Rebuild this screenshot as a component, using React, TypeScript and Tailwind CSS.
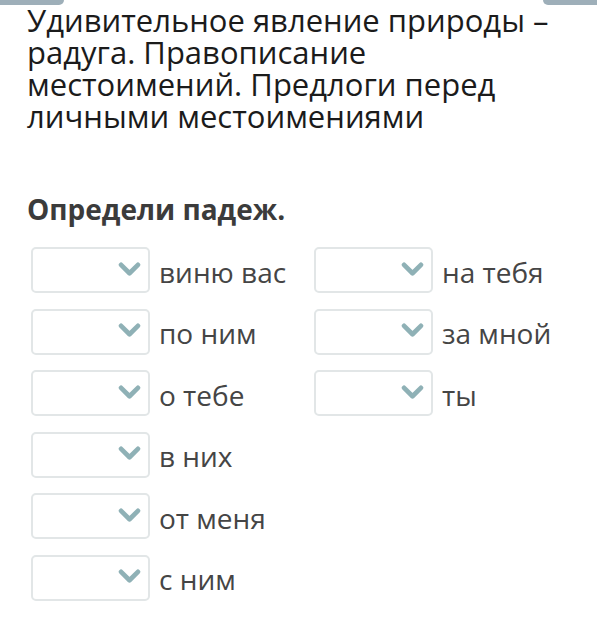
import React from 'react';

interface Item {
  id: number;
  label: string;
}

const LEFT: Item[] = [
  { id: 1, label: 'виню вас' },
  { id: 2, label: 'по ним' },
  { id: 3, label: 'о тебе' },
  { id: 4, label: 'в них' },
  { id: 5, label: 'от меня' },
  { id: 6, label: 'с ним' },
];

const RIGHT: Item[] = [
  { id: 7, label: 'на тебя' },
  { id: 8, label: 'за мной' },
  { id: 9, label: 'ты' },
];

const Chevron: React.FC = () => (
  <svg viewBox="0 0 24 16" className="w-[23px] h-[15px]" fill="none" stroke="#8fb1b6" strokeWidth="5" strokeLinecap="round" strokeLinejoin="round">
    <path d="M3 3l9 9 9-9" />
  </svg>
);

const Row: React.FC<{ item: Item }> = ({ item }) => (
  <div className="flex items-center h-[46px]">
    <div className="w-[119px] h-[46px] border-2 border-[#e2e6e7] rounded-[5px] bg-white flex items-center justify-end pr-[7px] pb-[2px]">
      <Chevron />
    </div>
    <span className="ml-[9px] pt-[3px] text-[28px] text-[#454545]">{item.label}</span>
  </div>
);

const App: React.FC = () => {
  return (
    <div className="relative w-[597px] h-[619px] bg-white overflow-hidden" style={{ fontFamily: '"Open Sans", sans-serif' }}>
      {/* top edge tabs */}
      <div className="absolute top-0 left-0 w-[64px] h-[5px] bg-[#9eafb9] rounded-br-[6px]" />
      <div className="absolute top-0 right-0 w-[54px] h-[5px] bg-[#9eafb9] rounded-bl-[6px]" />

      <div className="pl-[27px] pt-[4px]">
        <h1 className="text-[31px] leading-[32px] text-[#1b1b1b] font-normal w-[560px]">
          Удивительное явление природы – радуга. Правописание местоимений. Предлоги перед личными местоимениями
        </h1>
        <h2 className="mt-[60px] text-[28px] leading-[34px] font-bold text-[#3b3b3b]">Определи падеж.</h2>
      </div>

      <div className="flex pl-[31px] mt-[21px]">
        <div className="w-[283px] flex flex-col gap-[15.5px]">
          {LEFT.map((it) => (
            <Row key={it.id} item={it} />
          ))}
        </div>
        <div className="flex flex-col gap-[15.5px]">
          {RIGHT.map((it) => (
            <Row key={it.id} item={it} />
          ))}
        </div>
      </div>
    </div>
  );
};

export default App;
